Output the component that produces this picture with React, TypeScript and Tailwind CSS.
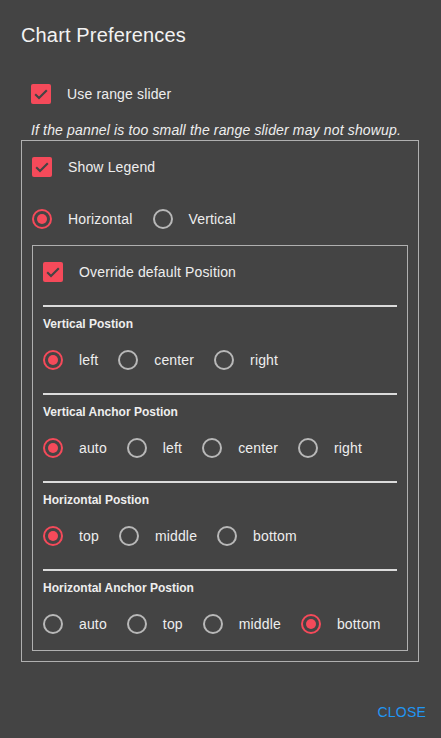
import React from "react";

const RED = "#f54a5a";

function Check() {
  return (
    <span className="w-5 h-5 rounded-[2px] bg-[#f54a5a] flex items-center justify-center shrink-0">
      <svg width="20" height="20" viewBox="0 0 20 20">
        <path d="M4.2 10.3 L8 14 L15.8 6.2" fill="none" stroke="#444444" strokeWidth="2.1" />
      </svg>
    </span>
  );
}

function Radio({ on }: { on?: boolean }) {
  return (
    <svg width="20" height="20" viewBox="0 0 20 20" className="shrink-0">
      <circle cx="10" cy="10" r="9" fill="none" stroke={on ? RED : "#b8b8b8"} strokeWidth="2" />
      {on && <circle cx="10" cy="10" r="5" fill={RED} />}
    </svg>
  );
}

function CheckRow({ label }: { label: string }) {
  return (
    <div className="h-10 flex items-center gap-4">
      <Check />
      <span className="text-[14px] tracking-[0.15px] text-[#eeeeee]">{label}</span>
    </div>
  );
}

function RadioRow({ items, sel }: { items: string[]; sel: number }) {
  return (
    <div className="h-10 flex items-center">
      {items.map((t, i) => (
        <div key={t} className="flex items-center gap-4 mr-5">
          <Radio on={i === sel} />
          <span className="text-[14px] tracking-[0.15px] text-[#eeeeee]">{t}</span>
        </div>
      ))}
    </div>
  );
}

function Section({ title, items, sel, first }: { title: string; items: string[]; sel: number; first?: boolean }) {
  return (
    <div className={first ? "" : "mt-[13px]"}>
      <div className="h-[2px] bg-[#dcdcdc]" />
      <div className="mt-[9px] h-4 leading-4 text-[12px] font-bold text-[#eeeeee]">{title}</div>
      <div className="mt-2">
        <RadioRow items={items} sel={sel} />
      </div>
    </div>
  );
}

export default function App() {
  return (
    <div className="w-[441px] h-[738px] bg-[#444444] text-[#eeeeee] overflow-hidden" style={{ fontFamily: '"Liberation Sans", Arial, sans-serif' }}>
      <div className="pt-[19px] px-[21px] text-[20px] leading-8 tracking-[0.15px] text-[#f2f2f2]">Chart Preferences</div>
      <div className="px-[21px] mt-[23px]">
        <div className="pl-[10px]">
          <CheckRow label="Use range slider" />
          <div className="mt-[6px] h-5 leading-5 text-[14px] italic tracking-[0.15px] text-[#eeeeee] whitespace-nowrap">
            If the pannel is too small the range slider may not showup.
          </div>
        </div>
        <div className="w-[398px] border border-[#b0b0b0] px-[10px] pt-[6px] pb-[10px]">
          <CheckRow label="Show Legend" />
          <div className="mt-3">
            <RadioRow items={["Horizontal", "Vertical"]} sel={0} />
          </div>
          <div className="mt-[6px] border border-[#b0b0b0] px-[10px] pt-[6px] pb-[6px]">
            <CheckRow label="Override default Position" />
            <div className="mt-[13px]">
              <Section first title="Vertical Postion" items={["left", "center", "right"]} sel={0} />
              <Section title="Vertical Anchor Postion" items={["auto", "left", "center", "right"]} sel={0} />
              <Section title="Horizontal Postion" items={["top", "middle", "bottom"]} sel={0} />
              <Section title="Horizontal Anchor Postion" items={["auto", "top", "middle", "bottom"]} sel={3} />
            </div>
          </div>
        </div>
      </div>
      <div className="flex justify-end pr-[15px] mt-[40px]">
        <span className="text-[14px] leading-5 text-[#2196f3] uppercase tracking-[0.2px]">Close</span>
      </div>
    </div>
  );
}
